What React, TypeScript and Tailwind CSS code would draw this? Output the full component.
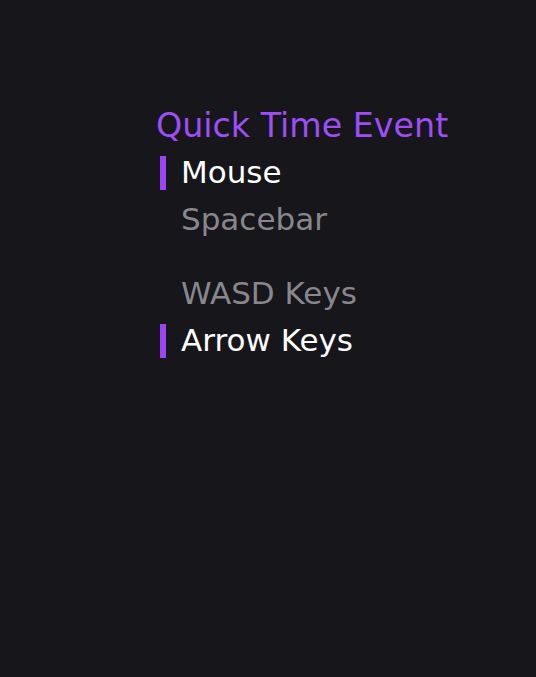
import React from 'react';

const items = [
  { id: 'mouse', label: 'Mouse', active: true },
  { id: 'spacebar', label: 'Spacebar', active: false },
  { id: 'wasd', label: 'WASD Keys', active: false, gapBefore: true },
  { id: 'arrows', label: 'Arrow Keys', active: true },
];

export default function App() {
  return (
    <div
      className="w-[536px] h-[677px] bg-[#16161b] pl-[156px] pt-[107px]"
      style={{ fontFamily: '"DejaVu Sans", sans-serif' }}
    >
      <h1 className="text-[33.3px] leading-[38px] text-[#9d4ef5] mb-[4px]">Quick Time Event</h1>
      <div className="flex flex-col">
        {items.map((item) => (
          <div
            key={item.id}
            className={`flex items-center h-[47px] ${item.gapBefore ? 'mt-[27px]' : ''}`}
          >
            <span
              className={`ml-[4px] w-[6px] h-[34px] ${item.active ? 'bg-[#9b45f5]' : 'bg-transparent'}`}
            />
            <span
              className={`ml-[15px] text-[31px] leading-[47px] ${
                item.active ? 'text-white' : 'text-[#88878c]'
              }`}
            >
              {item.label}
            </span>
          </div>
        ))}
      </div>
    </div>
  );
}
